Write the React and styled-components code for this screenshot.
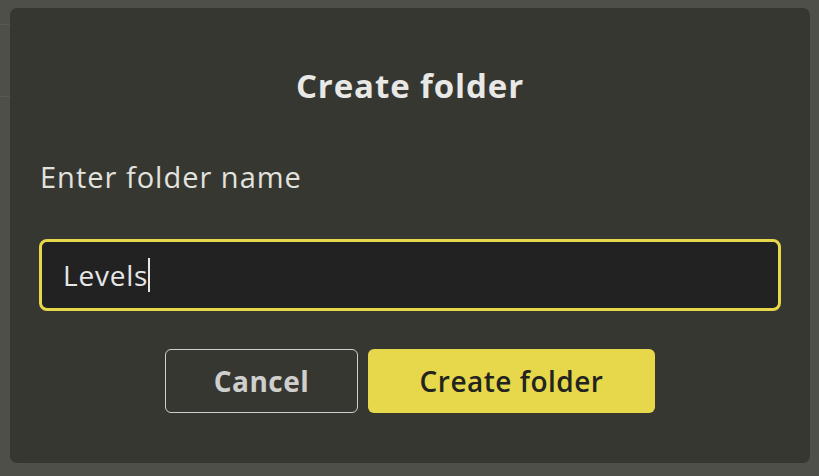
import React from "react";
import styled, { createGlobalStyle } from "styled-components";

const GlobalStyle = createGlobalStyle`
  html, body {
    margin: 0;
    padding: 0;
    background: #4f4f4a;
  }
  body {
    font-family: "Open Sans", "Noto Sans", sans-serif;
  }
`;

// the page behind the dialog shows a couple of faint divider lines on the left
const Backdrop = styled.div`
  width: 819px;
  height: 476px;
  padding: 8px 9px 13px 10px;
  box-sizing: border-box;
  background-color: #4f4f4a;
  background-image: linear-gradient(#585853, #585853),
    linear-gradient(#585853, #585853);
  background-size: 10px 1px, 10px 1px;
  background-position: 0 24px, 0 96px;
  background-repeat: no-repeat;
`;

const Dialog = styled.div`
  height: 100%;
  box-sizing: border-box;
  background: #373732;
  border-radius: 7px;
  padding: 58px 29px 50px 29px;
  display: flex;
  flex-direction: column;
`;

const Title = styled.h2`
  margin: 0;
  font-size: 33px;
  line-height: 40px;
  font-weight: 700;
  letter-spacing: 0.9px;
  color: #e8e8e6;
  text-align: center;
`;

const Label = styled.div`
  margin-top: 53px;
  padding-left: 1px;
  font-size: 29px;
  line-height: 36px;
  letter-spacing: 1px;
  color: #e2e2df;
`;

const InputBox = styled.div`
  margin-top: 44px;
  height: 72px;
  box-sizing: border-box;
  border: 3px solid #e6d84a;
  border-radius: 8px;
  background: #222222;
  padding: 0 21px;
  display: flex;
  align-items: center;
  font-size: 28px;
  letter-spacing: 0.8px;
  color: #e6e6e6;
`;

const Caret = styled.span`
  display: inline-block;
  width: 1.5px;
  height: 34px;
  background: #e6e6e6;
`;

const Actions = styled.div`
  margin-top: 38px;
  display: flex;
  justify-content: center;
  gap: 10px;
`;

const Button = styled.button`
  height: 64px;
  width: ${(p) => p.$width}px;
  box-sizing: border-box;
  border-radius: 6px;
  font-family: inherit;
  font-size: 28px;
  letter-spacing: 0.5px;
  font-weight: ${(p) => (p.$primary ? 600 : 700)};
  cursor: pointer;
  border: ${(p) => (p.$primary ? "none" : "1.5px solid #cfcfcd")};
  background: ${(p) => (p.$primary ? "#e6d84a" : "transparent")};
  color: ${(p) => (p.$primary ? "#23231f" : "#cfcfcd")};
`;

export default function App() {
  return (
    <>
      <GlobalStyle />
      <Backdrop>
        <Dialog>
          <Title>Create folder</Title>
          <Label>Enter folder name</Label>
          <InputBox>
            Levels
            <Caret />
          </InputBox>
          <Actions>
            <Button $width={193}>Cancel</Button>
            <Button $primary $width={287}>Create folder</Button>
          </Actions>
        </Dialog>
      </Backdrop>
    </>
  );
}
